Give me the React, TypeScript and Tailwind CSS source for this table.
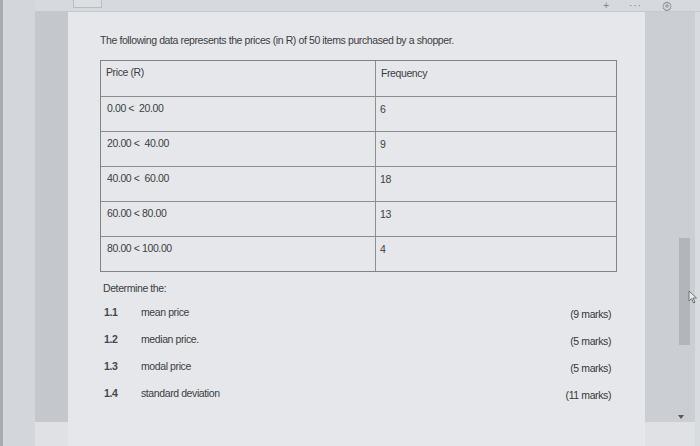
import React from "react";

const rows = [
  ["0.00 <  20.00", "6"],
  ["20.00 <  40.00", "9"],
  ["40.00 <  60.00", "18"],
  ["60.00 < 80.00", "13"],
  ["80.00 < 100.00", "4"],
];

const items = [
  ["1.1", "mean price", "(9 marks)"],
  ["1.2", "median price.", "(5 marks)"],
  ["1.3", "modal price", "(5 marks)"],
  ["1.4", "standard deviation", "(11 marks)"],
];

export default function App() {
  return (
    <div
      className="relative w-[700px] h-[446px] flex overflow-hidden bg-[#dfe1e4] text-[#3b3e44]"
      style={{ fontFamily: '"Liberation Sans", Arial, sans-serif' }}
    >
      <div className="w-[3px] bg-[#a7abb1]" />
      <div className="w-[32px] bg-[#d3d6da]" />
      <div className="flex-1 flex flex-col">
        {/* top bar */}
        <div className="h-[12px] flex items-start bg-[#d6d9dd] border-b border-[#c5c8cc]">
          <div className="ml-[38px] w-[29px] h-[8px] border border-[#b9bcc1] border-t-0 bg-[#dcdfe2]" />
          <div className="ml-auto flex items-center gap-[20px] mr-[28px] h-[11px] text-[#7d8187] text-[10px] leading-none">
            <span>+</span>
            <span className="tracking-[1px]">···</span>
            <svg width="10" height="10" viewBox="0 0 24 24" fill="none" stroke="#7d8187" strokeWidth="2">
              <circle cx="12" cy="12" r="3" />
              <path d="M12 2l2 3 3-1 1 3 3 1-1 3 2 2-2 2 1 3-3 1-1 3-3-1-2 3-2-3-3 1-1-3-3-1 1-3-2-2 2-2-1-3 3-1 1-3 3 1z" />
            </svg>
          </div>
        </div>
        <div className="flex-1 flex">
          {/* dark strip */}
          <div className="w-[33px] flex flex-col">
            <div className="h-[410px] bg-[#c4c7cb]" />
          </div>
          {/* panel */}
          <div className="w-[577px] bg-[#e5e7ea] pl-[32px] pt-[22px] text-[10.5px] tracking-[-0.4px] leading-[13px]">
            <div>The following data represents the prices (in R) of 50 items purchased by a shopper.</div>
            <div className="mt-[13px] w-[517px] border border-[#7f848b]">
              <div className="grid grid-cols-[275px_1fr] h-[35px]">
                <div className="pl-[5px] pt-[5px] border-r border-[#8a8f95]">Price (R)</div>
                <div className="pl-[5px] pt-[6px]">Frequency</div>
              </div>
              {rows.map(([a, b]) => (
                <div key={a} className="grid grid-cols-[275px_1fr] h-[35px] border-t border-[#8a8f95]">
                  <div className="pl-[6px] pt-[5px] border-r border-[#8a8f95] whitespace-pre">{a}</div>
                  <div className="pl-[4px] pt-[6px]">{b}</div>
                </div>
              ))}
            </div>
            <div className="mt-[10px] pl-[3px]">Determine the:</div>
            <div className="mt-[4px] w-[511px] flex flex-col">
              {items.map(([n, t, m]) => (
                <div key={n} className="h-[27px] flex items-center">
                  <span className="w-[41px] pl-[4px] font-semibold text-[#44474c]">{n}</span>
                  <span>{t}</span>
                  <span className="ml-auto mt-[3px] text-[#34373c] font-medium">{m}</span>
                </div>
              ))}
            </div>
          </div>
          {/* right strip */}
          <div className="flex-1 flex">
            <div className="w-[50px] flex flex-col">
              <div className="h-[410px] bg-[#cbced2] relative">
                <div className="absolute left-[34px] top-[226px] w-[11px] h-[107px] bg-[#b2b5b9]" />
                <div className="absolute left-[33px] top-[403px] w-0 h-0 border-l-[3px] border-r-[3px] border-t-[4px] border-l-transparent border-r-transparent border-t-[#55585d]" />
              </div>
            </div>
            <div className="flex-1 bg-[#d9dcdf]" />
          </div>
        </div>
      </div>
      {/* mouse cursor */}
      <svg className="absolute left-[688px] top-[290px]" width="10" height="14" viewBox="0 0 10 14">
        <path d="M1 1 L1 11 L3.5 8.5 L5.5 13 L7 12.3 L5 8 L8.5 8 Z" fill="#e8eaed" stroke="#6e7277" strokeWidth="1" />
      </svg>
    </div>
  );
}
